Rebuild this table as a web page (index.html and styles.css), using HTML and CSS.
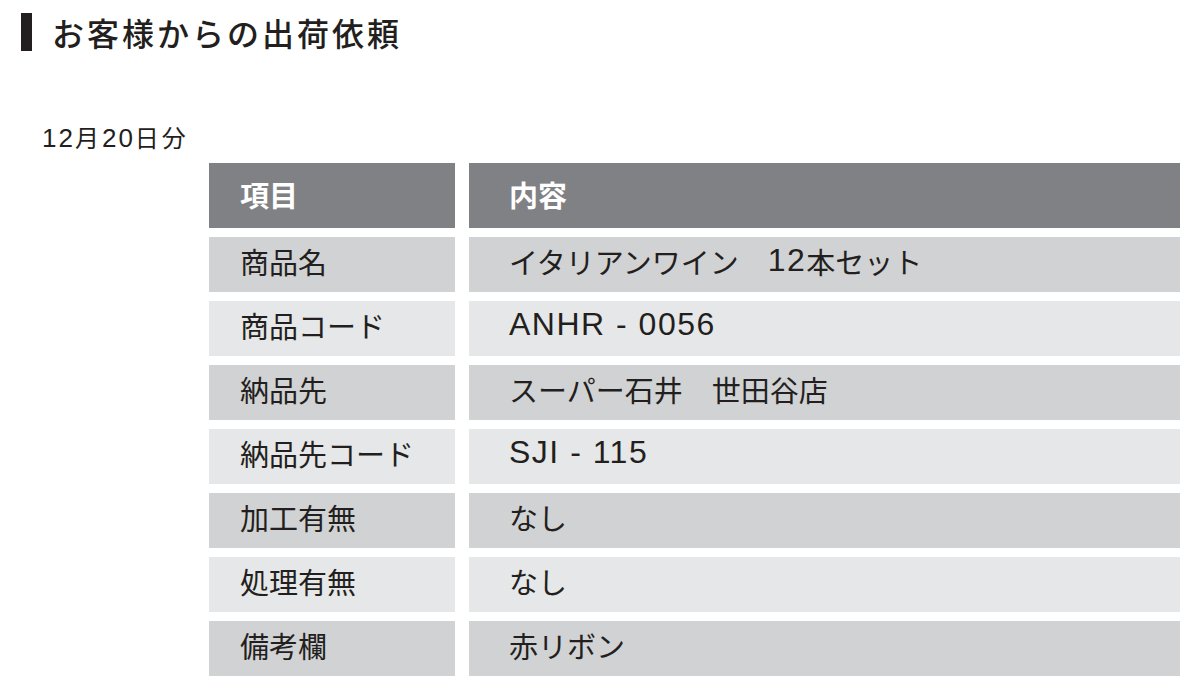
FILE: index.html
```html
<!DOCTYPE html>
<html lang="ja">
<head>
<meta charset="utf-8">
<title>お客様からの出荷依頼</title>
<link rel="stylesheet" href="styles.css">
</head>
<body>
<div class="page">
  <h1 class="title"><span class="title-bar"></span><span class="title-text">お客様からの出荷依頼</span></h1>
  <p class="date"><span class="lat">12</span>月<span class="lat">20</span>日分</p>
  <div class="table">
    <div class="row head"><div class="cell key">項目</div><div class="cell val">内容</div></div>
    <div class="row odd"><div class="cell key">商品名</div><div class="cell val">イタリアンワイン　<span class="lat">12</span>本セット</div></div>
    <div class="row even"><div class="cell key">商品コード</div><div class="cell val"><span class="lat">ANHR - 0056</span></div></div>
    <div class="row odd"><div class="cell key">納品先</div><div class="cell val">スーパー石井　世田谷店</div></div>
    <div class="row even"><div class="cell key">納品先コード</div><div class="cell val"><span class="lat">SJI - 115</span></div></div>
    <div class="row odd"><div class="cell key">加工有無</div><div class="cell val">なし</div></div>
    <div class="row even"><div class="cell key">処理有無</div><div class="cell val">なし</div></div>
    <div class="row odd"><div class="cell key">備考欄</div><div class="cell val">赤リボン</div></div>
  </div>
</div>
</body>
</html>
```

FILE: styles.css
```css
html, body {
  margin: 0;
  padding: 0;
  background: #ffffff;
}
body {
  font-family: "Liberation Sans", "Noto Sans CJK JP", sans-serif;
  color: #231f20;
}
.page {
  padding: 13px 0 0 21px;
}
.title {
  display: flex;
  align-items: center;
  gap: 20px;
  height: 38px;
  margin: 0;
}
.title-bar {
  display: block;
  width: 11px;
  height: 38px;
  background: #231f20;
}
.title-text {
  font-family: "Noto Sans CJK JP", sans-serif;
  font-size: 32px;
  font-weight: 500;
  letter-spacing: 3px;
  line-height: 38px;
}
.date {
  margin: 72px 0 0 21px;
  font-size: 24px;
  line-height: 30px;
  letter-spacing: 3px;
}
.date .lat {
  font-size: 26px;
  letter-spacing: 2px;
}
.table {
  margin: 9px 0 0 188px;
  width: 971px;
  display: flex;
  flex-direction: column;
  gap: 9px;
}
.row {
  display: grid;
  grid-template-columns: 246px 1fr;
  column-gap: 14px;
  height: 55px;
}
.row.head {
  height: 65px;
}
.cell {
  display: flex;
  align-items: center;
  font-size: 29px;
  white-space: pre;
  padding-bottom: 8px;
}
.head .cell {
  padding-bottom: 3px;
}
.key {
  padding-left: 31px;
}
.val {
  padding-left: 40px;
}
.lat {
  font-family: "Liberation Sans", sans-serif;
  font-size: 32px;
  letter-spacing: 1.5px;
}
.head .cell {
  background: #808184;
  color: #ffffff;
  font-weight: 700;
}
.odd .cell {
  background: #d1d2d4;
}
.even .cell {
  background: #e6e7e8;
}
```
